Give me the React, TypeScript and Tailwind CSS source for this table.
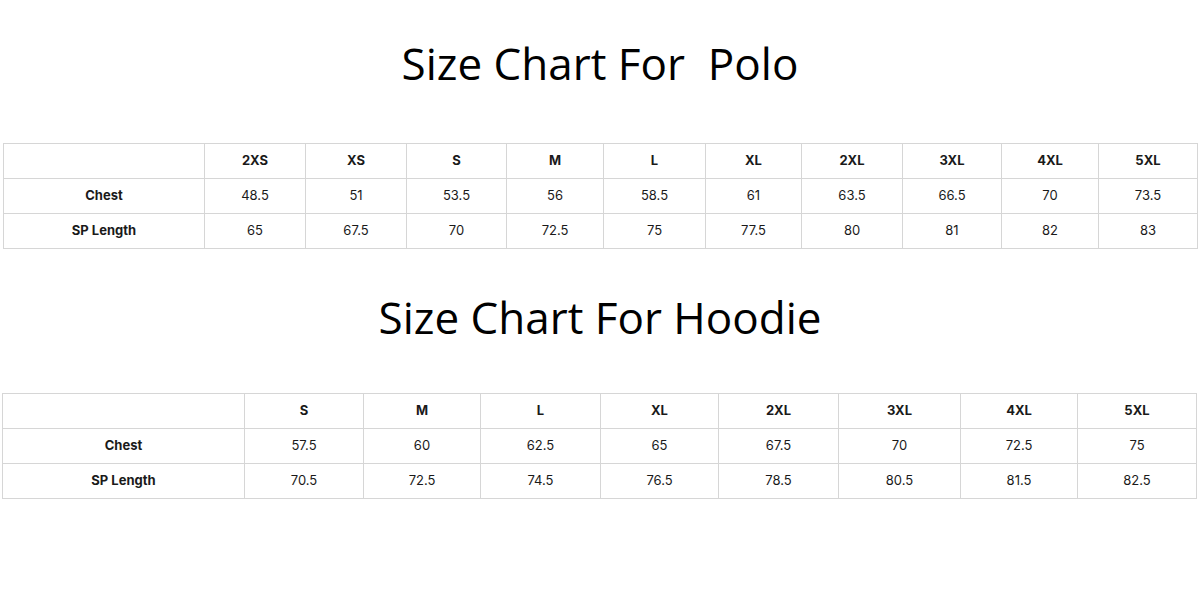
const polo = {
  sizes: ["2XS", "XS", "S", "M", "L", "XL", "2XL", "3XL", "4XL", "5XL"],
  widths: [201, 101, 101, 100, 97, 102, 96, 101, 99, 97, 99],
  rows: [
    { label: "Chest", values: ["48.5", "51", "53.5", "56", "58.5", "61", "63.5", "66.5", "70", "73.5"] },
    { label: "SP Length", values: ["65", "67.5", "70", "72.5", "75", "77.5", "80", "81", "82", "83"] },
  ],
};

const hoodie = {
  sizes: ["S", "M", "L", "XL", "2XL", "3XL", "4XL", "5XL"],
  widths: [242, 119, 117, 120, 118, 120, 122, 117, 119],
  rows: [
    { label: "Chest", values: ["57.5", "60", "62.5", "65", "67.5", "70", "72.5", "75"] },
    { label: "SP Length", values: ["70.5", "72.5", "74.5", "76.5", "78.5", "80.5", "81.5", "82.5"] },
  ],
};

type Chart = typeof polo;

function SizeTable({ chart }: { chart: Chart }) {
  return (
    <table className="border-collapse table-fixed font-['Inter',sans-serif] text-[13px] text-[#1a1a1a]">
      <colgroup>
        {chart.widths.map((w, i) => (
          <col key={i} style={{ width: w }} />
        ))}
      </colgroup>
      <tbody>
        <tr className="h-[35px]">
          <td className="border border-[#d6d6d6]"></td>
          {chart.sizes.map((s) => (
            <td key={s} className="border border-[#d6d6d6] text-center font-bold">
              {s}
            </td>
          ))}
        </tr>
        {chart.rows.map((row) => (
          <tr key={row.label} className="h-[35px]">
            <td className="border border-[#d6d6d6] text-center font-bold">{row.label}</td>
            {row.values.map((v, i) => (
              <td key={i} className="border border-[#d6d6d6] text-center">
                {v}
              </td>
            ))}
          </tr>
        ))}
      </tbody>
    </table>
  );
}

export default function App() {
  return (
    <div className="w-[1200px] h-[600px] bg-white overflow-hidden">
      {/* Polo */}
      <h1 className="pt-[32px] text-center text-[44px] leading-[62px] text-black font-['Open_Sans',sans-serif] whitespace-pre">
        {"Size Chart For  Polo"}
      </h1>
      <div className="mt-[49px] pl-[3px]">
        <SizeTable chart={polo} />
      </div>

      {/* Hoodie */}
      <h1 className="mt-[37px] text-center text-[44px] leading-[62px] text-black font-['Open_Sans',sans-serif]">
        Size Chart For Hoodie
      </h1>
      <div className="mt-[45px] pl-[2px]">
        <SizeTable chart={hoodie} />
      </div>
    </div>
  );
}
